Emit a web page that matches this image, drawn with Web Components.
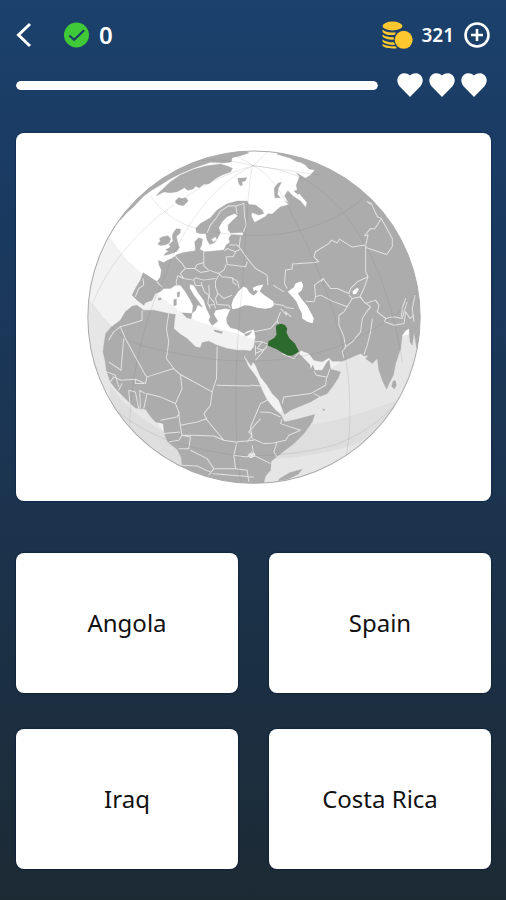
<!DOCTYPE html>
<html lang="en">
<head>
<meta charset="utf-8">
<meta name="viewport" content="width=device-width, initial-scale=1">
<title>Country quiz</title>
<style>
html { min-height: 100%; background: linear-gradient(#1b416c, #1a3a61 22%, #1b334d 58%, #1c2a34); }
body { margin: 0; font-family: "Noto Sans", "Open Sans", sans-serif; }
</style>
</head>
<body>
<quiz-screen></quiz-screen>
<script>
const define = (name, html) => {
  const template = document.createElement('template');
  template.innerHTML = html;
  customElements.define(name, class extends HTMLElement {
    constructor() {
      super();
      this.attachShadow({ mode: 'open' }).append(template.content.cloneNode(true));
    }
  });
};

define('quiz-header', `
<style>
:host { display: flex; align-items: center; height: 32px; color: #fff; }
button { display: flex; padding: 0; border: 0; background: none; color: inherit; cursor: pointer; }
svg { display: block; flex: none; }
.score { display: flex; align-items: center; gap: 10px; margin-left: 32px; font-size: 24px; line-height: 32px; font-weight: 600; }
.coins { display: flex; align-items: center; gap: 8px; margin: 0 1px 0 auto; font-size: 19px; line-height: 32px; font-weight: 600; }
.coins button { margin-left: 2px; }
</style>
<button aria-label="Back"><svg width="16" height="26" viewBox="0 0 16 26" fill="none" stroke="currentColor" stroke-width="3"><path d="M14 2 2.500 13 14 24"/></svg></button>
<div class="score">
  <svg width="25" height="26" viewBox="0 0 26 26"><circle cx="13" cy="13" r="13" fill="#41ca38"/><path d="m5.500 13.500 5 4.500L21 8" fill="none" stroke="#1a3d66" stroke-width="2.200"/></svg>
  <span>0</span>
</div>
<div class="coins">
  <svg width="31" height="28" viewBox="0 0 31 28" fill="#fdc72f">
    <ellipse cx="10.500" cy="5" rx="10" ry="4.400"/>
    <path d="M.5 8.500C3 11 8 12 14 11.200L12.500 14C7 14.500 2 13.500.5 10.500zM.5 13.500C3 15.500 8 16.500 12 16.200L11.700 18.800C6 19 2 17.500.5 15.500zM.5 18.500C3 20.500 8 21.500 12 21.300L13 24C7 24 2 22.500.5 20.500zM.5 23C4 25 9 25.500 13.500 25.300L15 27.200C8 28 2 26.800.5 24.800z"/>
    <circle cx="21.700" cy="18.800" r="9"/>
  </svg>
  <span>321</span>
  <button aria-label="Get more coins"><svg width="26" height="26" viewBox="0 0 26 26" fill="none" stroke="currentColor" stroke-width="2.600"><circle cx="13" cy="13" r="11.500"/><path d="M13 7v12M7 13h12"/></svg></button>
</div>`);

define('heart-icon', `
<style>:host { display: block; } svg { display: block; }</style>
<svg width="26" height="24" viewBox="0 0 26 24" fill="#fff"><path d="M13 24 3 13.800C-.4 10-.6 5 2.500 2.200 5.500-.5 10-.2 13 2.600c3-2.800 7.500-3.100 10.500-.4 3.100 2.800 2.900 7.800-.5 11.600z"/></svg>`);

define('quiz-status', `
<style>
:host { display: flex; align-items: center; gap: 19px; }
progress { appearance: none; flex: 1; min-width: 0; height: 9px; border: 0; border-radius: 5px; background: #14305c; overflow: hidden; }
progress::-webkit-progress-bar { background: #14305c; }
progress::-webkit-progress-value { background: #fff; border-radius: 5px; }
div { display: flex; gap: 6px; margin-right: 4px; }
</style>
<progress aria-label="Time left" value="100" max="100"></progress>
<div role="img" aria-label="3 lives"><heart-icon></heart-icon><heart-icon></heart-icon><heart-icon></heart-icon></div>`);

define('globe-map', `
<style>
:host { display: block; }
svg { display: block; width: 100%; height: auto; }
.land { fill: #acacac; stroke: #a6a6a6; stroke-width: 1; stroke-linejoin: round; }
.sea { fill: #fff; }
.borders { fill: none; stroke: #e2e2e2; stroke-width: 3; stroke-linejoin: round; }
.grid { fill: none; stroke: #777; stroke-opacity: .2; stroke-width: 2.500; }
</style>
<svg viewBox="20 15 1001 1002" role="img" aria-label="Globe with the country to name shown in green">
  <defs><clipPath id="disc"><circle cx="520.500" cy="516" r="498"/></clipPath></defs>
  <g clip-path="url(#disc)">
    <rect width="1040" height="1040" fill="#fff"/>
    <path fill="#f2f2f2" d="M60 250 95 285 140 345 185 385 240 455 300 500 350 528 450 560 530 585 640 600 1040 590V1040H0V250Z"/>
    <path fill="#e6e6e6" d="M0 430 35 475Q55 515 110 560V600L300 960 540 1020 640 1000 1040 900V540L1000 560 800 640 700 700 600 800 560 780 520 1040H0Z"/>
    <path fill="#dedede" d="M90 720Q160 830 340 900V1040L240 960 90 800ZM680 840Q820 820 1010 740L940 830 820 900Q700 935 570 942Z"/>
    <g class="land">
      <path d="M228 152 235 143 245 134 270 110 300 90 340 73 380 62 420 57 440 63 456 70 450 81 425 90 404 102 385 116 370 118 356 128 345 124 338 132 322 136 312 128 290 140 270 143 250 141Z"/>
      <path d="M120 225 140 202 160 185 190 153 215 135 245 117 270 101 300 86 340 69 390 52 430 54 452 51 455 38 480 32 505 24 480 10 320 20 100 180Z"/>
      <path d="m285 167 10-9 10 3 12-3 6 10-14 14-15-3-8-6ZM472 100l27-2-5 10-10 2 2 10-7 2-5-10ZM288 251l12 1-1 12-11 10 2 10 3 14 4 9-8 12-20 8-18 4 5-8 9-3-9-6 14-8-4-8 12-10-2-10 0-10 5-8ZM232 297l8-9-3-8 12-6 14-2 8 10-5 12-10 5-16 2ZM583 158l-2-28 12-16 10-2-10 18-2 18 8 10ZM640 138l14-4 8 8-10 6Z"/>
      <path d="M188 383 200 390 230 410 240 395 243 375 236 360 234 346 250 352 262 345 275 340 290 328 310 322 345 317 343 290 355 278 366 282 364 300 358 312 370 320 400 318 430 315 437 300 448 292 445 280 452 269 487 271 488 262 450 264 443 255 443 240 458 225 472 212 462 205 440 215 425 230 415 248 420 262 412 278 403 292 388 298 380 285 376 265 362 266 348 262 346 250 360 235 390 218 410 195 440 176 470 168 500 168 505 178 525 180 545 195 550 205 535 210 515 202 512 212 522 232 530 228 555 214 562 206 575 207 600 185 625 179 615 168 625 175 612 152 622 137 640 155 660 168 676 187 679 172 662 152 650 135 647 120 657 95 648 84 675 100 690 90 703 75 685 72 675 60 660 52 650 50 630 40 590 28 600 0 1040 0V600L1008 610 1000 560 995 600 988 590 985 550 975 556 965 570 960 610 945 655 938 690 925 715 918 732 905 705 895 675 890 640 875 655 855 640 865 632 850 632 840 625 810 638 785 648 755 648 745 638 725 650 700 645 685 625 660 615 655 625 670 640 688 658 690 672 697 660 702 675 725 675 740 650 746 645 750 672 780 680 772 700 755 725 740 745 715 755 690 770 660 782 630 795 612 808 595 765 575 745 560 720 540 695 525 660 517 650 512 662 493 635 508 620 520 606 525 575 520 552 500 558 490 565 470 552 450 548 440 535 438 520 446 500 450 493 435 490 405 495 400 508 412 528 395 541 385 525 390 515 378 490 370 465 355 445 340 420 328 417 328 430 340 450 355 470 366 486 352 479 345 496 335 504 338 482 330 465 315 440 300 420 285 420 270 430 250 430 240 440 225 445 215 465 195 473 190 480 170 465 155 450 165 430 180 405Z"/>
      <path d="m305 503 30 2-3 16-14-4ZM280 463l8-1v18l-8 2ZM290 442l8-2-1 14-6 2ZM400 554l26 6-2 5-20-5ZM492 567l22-9-8 11-10 4ZM233 460l8-2 2 5-8 2ZM937 708l7-2 3 15-6 10-8-8ZM725 792l8 1-3 4ZM597 1000l30-18 38-10-12 15-30 14-30 5Z"/>
      <path d="M120 525 135 500 155 483 170 480 190 495 220 495 265 505 285 508 282 530 280 550 300 567 320 580 345 605 360 608 365 592 385 588 410 600 440 610 470 615 495 615 512 618 490 635 505 665 520 685 530 700 545 735 560 765 585 795 602 810 612 830 650 822 702 808 695 830 670 865 640 895 600 925 572 948 570 975 555 992 545 1030H305L305 960 302 935 290 912 262 890 252 865 248 835 225 830 212 815 195 792 165 788 140 765 110 735 90 710 78 675 75 650 68 620 72 590 76 565 92 546Z"/>
    </g>
    <g class="sea">
      <path d="M453 480 458 462 473 440 488 425 498 428 505 440 514 448 520 451 532 440 526 434 520 438 517 428 530 422 549 418 543 428 538 439 552 450 578 468 580 480 572 488 555 491 530 488 510 482 492 480 472 489 456 492Z"/>
      <path d="M622 440 640 426 645 415 662 408 668 420 664 435 652 445 662 460 680 482 700 520 696 534 680 530 665 520 664 505 656 490 648 470 637 456ZM816 438l14-10 5 5-8 13-10 2ZM393 283l12-8 4 8-10 8Z"/>
      <path fill="#ededed" d="M505 925l18-2 2 10-15 6-9-6Z"/>
    </g>
    <g class="borders">
      <path d="M380 263 390 240 408 218 420 198 445 182 466 183 470 208M466 183 490 175 492 210 497 240 489 260M480 275 476 305 500 340 525 370 560 390 562 420M447 300 470 300 478 308M432 318 440 310 465 320 458 335 437 335M465 320 480 312M437 335 440 358 495 365 500 350M437 358 430 375 415 385 385 375 370 362 370 320M370 352 350 358 343 370 360 382 385 378M415 385 425 395 455 398 472 410 476 430M415 390 405 408 405 425 412 445 430 460 455 450M405 400 370 405 345 398 340 405 310 400 300 385 315 370 305 355 290 340 285 332M310 400 292 392 287 410 290 420M340 405 345 420 365 422 372 440 385 450 382 475 390 490M365 422 362 410M385 420 387 455 400 470 405 490M412 445 405 460 410 478 445 480 450 490M400 478 385 480M455 398 458 412 468 420M230 410 245 425M188 400 190 420 175 430 165 455M315 370 343 370"/>
      <path d="M578 420 610 440M620 430 612 415 615 375 635 372 635 357 702 352 715 350 700 335 705 320 745 295 752 285 770 293 777 282 815 306 855 300 858 290 862 270 852 272 870 250 882 252 902 220 890 215 872 175 860 170 870 178M902 220 935 280 935 305 918 328 858 308 855 300M855 330 855 380 862 395 850 430 838 455M862 395 830 410 810 430 805 445 770 430 750 430 728 400 702 420 705 455 700 470 675 468M728 400 722 410M705 455 720 450 755 468 800 485 790 500 775 510 775 540 790 575 795 605 785 620 790 638M800 485 815 460 805 450M815 460 840 455 850 470 870 485 858 500 845 520 840 560 815 590 795 605M838 455 855 475 885 465 895 480 890 500 915 520 940 515 965 520 970 500 980 470M875 520 870 560 860 600 850 628M915 520 912 530 940 540 970 535 975 500 988 520 1000 510M580 476 605 480 620 488 640 490M600 490 618 510 615 500 632 515M600 500 590 525 600 560M855 300 855 330M975 460 965 490 962 515M1003 450 995 490 1000 530"/>
      <path d="M520 560 570 550 590 528M520 590 545 590 560 596M545 590 530 610 550 615 525 645M525 600 525 630M605 625 640 640 655 622M560 600 555 610 525 625M610 755 690 745 735 720 738 695 708 690 700 678M610 755 605 775M700 745 718 755M740 695 748 672M510 720 545 722M560 765 540 775 525 810 510 845 515 880 550 895 580 893 615 885 625 870 660 855 600 835 605 820M540 800 570 802 600 815M590 890 580 920 590 935M515 900 520 930 570 955M625 870 660 855"/>
      <path d="M120 545 135 580 195 690 200 695 280 670 258 640 265 590 258 550 265 505M185 495 185 525 155 535 120 545 100 560 85 585M130 580 122 675 85 650M90 710 100 695 122 705 165 702 195 715 200 695M410 605 408 700 395 740M408 720 510 722M280 670 300 688 395 740 390 780 370 805 380 825 430 885 465 890 520 885M300 688 305 730 285 775 240 755 200 745 190 790M285 775 295 800 298 830 300 840 350 830 380 820M298 830 305 870 335 870 400 872 430 885M165 702 165 715 190 715M125 715 115 735M150 788 145 735 165 740 175 790M180 790 178 735 195 745M80 680 105 690 115 725M240 825 290 815 298 800M248 865 300 860M265 890 295 885 305 870 330 875 325 910 295 910M330 915 380 940 400 970 465 970 460 930 470 890M460 930 500 935 515 920M400 970 385 990M465 970 500 975 505 1010M305 960 350 962 400 985 520 995M500 890 515 870 505 860 540 820"/>
    </g>
    <path fill="#2d6a2d" d="M586 545 590 538 603 536 614 540 620 550 618 563 627 580 643 595 655 618 650 623 634 632 621 631 600 620 590 613 562 601 564 588 582 578 588 568Z"/>
    <g class="grid">
      <path d="M518 62C500 100 498 300 480 480 465 640 458 850 480 1010M518 62C390 120 300 260 255 390 190 520 150 700 148 840M518 62C350 110 130 250 38 470M518 62C590 100 620 180 660 260 730 400 800 600 805 720 812 830 805 900 795 935M518 62C650 75 720 120 790 205 860 290 930 430 965 650M518 62 720 90M518 62 560 22M518 62 460 28M210 152C240 200 300 240 350 250M395 260C500 278 620 275 710 240 790 210 840 170 860 145M35 475C80 540 130 590 200 605 400 655 550 660 700 625 800 605 960 520 1010 440M60 750Q130 830 250 880Q400 930 510 932Q650 930 760 900Q900 850 990 720M518 62C420 40 380 40 330 55"/>
    </g>
  </g>
  <circle cx="520.500" cy="516" r="498" fill="none" stroke="#aaa" stroke-width="3"/>
</svg>`);

define('question-card', `
<style>
:host { display: block; padding: 17px 70px 17px 71px; border-radius: 8px; background: #fff; box-shadow: 0 0 1px 1px #0b214577; }
</style>
<slot></slot>`);

define('answer-button', `
<style>
:host { display: block; }
button { display: block; width: 100%; height: 140px; padding: 0 12px; border: 0; border-radius: 8px; background: #fff; color: #111;
  font: 400 24px/32px "Noto Sans", "Open Sans", sans-serif; box-shadow: 0 0 1px 1px #06183577; cursor: pointer; }
</style>
<button><slot></slot></button>`);

define('quiz-screen', `
<style>
:host { display: block; padding: 19px 15px 31px 16px; }
quiz-status { margin-top: 22px; }
question-card { margin-top: 36px; }
.answers { display: grid; grid-template-columns: 1fr 1fr; gap: 36px 31px; margin-top: 52px; }
</style>
<quiz-header></quiz-header>
<quiz-status></quiz-status>
<question-card><globe-map></globe-map></question-card>
<div class="answers">
  <answer-button>Angola</answer-button>
  <answer-button>Spain</answer-button>
  <answer-button>Iraq</answer-button>
  <answer-button>Costa Rica</answer-button>
</div>`);
</script>
</body>
</html>
